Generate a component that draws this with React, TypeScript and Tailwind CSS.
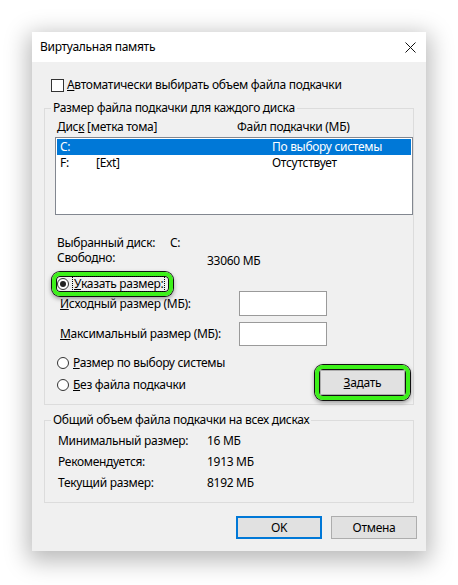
import React from "react";

const font = { fontFamily: '"Noto Sans", "Open Sans", sans-serif' };

function Radio({ checked = false }: { checked?: boolean }) {
  return (
    <span className="w-[12px] h-[12px] rounded-full border border-[#333] bg-white flex items-center justify-center shrink-0">
      {checked && <span className="w-[6px] h-[6px] rounded-full bg-[#222]" />}
    </span>
  );
}

const green = "border-4 border-[#3df11a] rounded-[8px] shadow-[0_0_0_1px_#111,inset_0_0_0_1px_#111,0_2px_4px_1px_rgba(0,0,0,0.35)]";

export default function App() {
  return (
    <div className="min-h-screen bg-white flex justify-center pt-[32px] text-[12px] leading-[16px] tracking-[-0.3px] text-black" style={font}>
      <div className="w-[394px] h-[519px] flex flex-col shadow-[0_6px_22px_4px_rgba(0,0,0,0.28)]">
        <div className="h-[30px] bg-white flex items-center justify-between pl-[8px] pr-[10px]">
          <span>Виртуальная память</span>
          <svg width="11" height="11" viewBox="0 0 11 11">
            <path d="M0.5 0.5 L10.5 10.5 M10.5 0.5 L0.5 10.5" stroke="#111" strokeWidth="1" />
          </svg>
        </div>

        <div className="flex-1 bg-[#f0f0f0] pt-[15px] flex flex-col">
          <div className="flex items-center h-[16px] pl-[19px] gap-[3px]">
            <span className="w-[13px] h-[13px] border border-[#333] bg-white" />
            <span><u>А</u>втоматически выбирать объем файла подкачки</span>
          </div>

          <fieldset className="mx-[12px] mt-[7px] border border-[#dcdcdc] h-[305px]">
            <legend className="ml-[6px] px-[2px]">Размер файла подкачки для каждого диска</legend>
            <div className="flex mt-[3px] pl-[12px]">
              <span className="w-[180px]">Дис<u>к</u> [метка тома]</span>
              <span>Файл подкачки (МБ)</span>
            </div>
            <div className="ml-[10px] mt-[2px] w-[358px] h-[78px] border border-[#828790] bg-white p-[1px]">
              <div className="flex h-[16px] items-center bg-[#0078d7] text-white pl-[3px]">
                <span className="w-[36px]">C:</span>
                <span className="w-[176px]"></span>
                <span>По выбору системы</span>
              </div>
              <div className="flex h-[16px] items-center pl-[3px]">
                <span className="w-[36px]">F:</span>
                <span className="w-[176px]">[Ext]</span>
                <span>Отсутствует</span>
              </div>
            </div>

            <div className="flex mt-[20px] pl-[12px] h-[15px] items-center">
              <span className="w-[113px]">Выбранный диск:</span>
              <span>C:</span>
            </div>
            <div className="flex pl-[12px] h-[19px] items-start">
              <span className="w-[150px]">Свободно:</span>
              <span className="pt-[3px]">33060 МБ</span>
            </div>

            <div className="relative flex items-center gap-[3px] pl-[12px] mt-[7px] h-[15px]">
              <div className={"absolute left-[7px] top-[-4px] w-[121px] h-[24px] " + green} />
              <span className="relative flex items-center gap-[3px]">
                <Radio checked />
                <span className="border border-dotted border-black px-[1px] leading-[14px]"><u>У</u>казать размер:</span>
              </span>
            </div>

            <div className="flex flex-col gap-[6px] pl-[15px]">
              <div className="flex items-center">
                <span className="w-[179px]"><u>И</u>сходный размер (МБ):</span>
                <span className="w-[88px] h-[25px] bg-white border border-[#9a9a9a]" />
              </div>
              <div className="flex items-center">
                <span className="w-[179px]"><u>М</u>аксимальный размер (МБ):</span>
                <span className="w-[88px] h-[24px] bg-white border border-[#9a9a9a]" />
              </div>
            </div>

            <div className="flex justify-between items-start mt-[9px] pl-[12px] pr-[3px]">
              <div className="flex flex-col gap-[6px]">
                <div className="flex items-center gap-[4px] h-[16px]">
                  <Radio />
                  <span><u>Р</u>азмер по выбору системы</span>
                </div>
                <div className="flex items-center gap-[4px] h-[16px]">
                  <Radio />
                  <span><u>Б</u>ез файла подкачки</span>
                </div>
              </div>
              <div className={"mt-[10px] p-[1px] " + green}>
                <button className="w-[85px] h-[25px] bg-[#e1e1e1] border border-[#adadad] flex items-center justify-center">
                  <span><u>З</u>адать</span>
                </button>
              </div>
            </div>
          </fieldset>

          <fieldset className="mx-[12px] mt-[7px] border border-[#dcdcdc] pb-[11px]">
            <legend className="ml-[6px] px-[2px]">Общий объем файла подкачки на всех дисках</legend>
            <div className="flex flex-col gap-[5px] mt-[5px] pl-[13px]">
              <div className="flex h-[16px] items-center">
                <span className="w-[149px]">Минимальный размер:</span>
                <span>16 МБ</span>
              </div>
              <div className="flex h-[16px] items-center">
                <span className="w-[149px]">Рекомендуется:</span>
                <span>1913 МБ</span>
              </div>
              <div className="flex h-[16px] items-center">
                <span className="w-[149px]">Текущий размер:</span>
                <span>8192 МБ</span>
              </div>
            </div>
          </fieldset>

          <div className="flex justify-end gap-[9px] mt-[13px] pr-[9px]">
            <button className="w-[86px] h-[23px] bg-[#e1e1e1] border-2 border-[#0078d7] flex items-center justify-center">OK</button>
            <button className="w-[86px] h-[23px] bg-[#e1e1e1] border border-[#adadad] flex items-center justify-center">Отмена</button>
          </div>
        </div>
      </div>
    </div>
  );
}
